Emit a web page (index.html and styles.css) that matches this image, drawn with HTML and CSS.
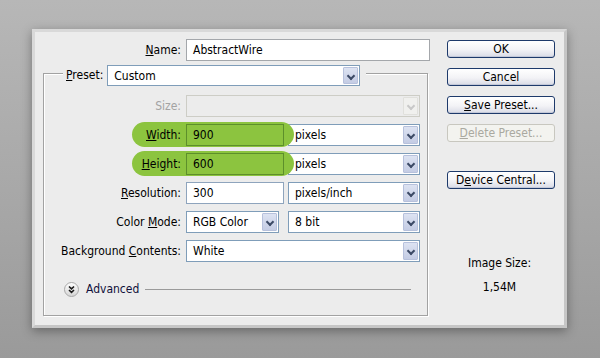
FILE: index.html
```html
<!DOCTYPE html>
<html lang="en">
<head>
    <meta charset="UTF-8">
    <title>New</title>
    <link rel="stylesheet" href="styles.css">
</head>
<body>
    <div class="dialog">
        <div class="main">
            <div class="name-row">
                <label class="lbl"><u>N</u>ame:</label>
                <div class="field text">AbstractWire</div>
            </div>

            <div class="fieldset">
                <div class="legend">
                    <label class="lbl"><u>P</u>reset:</label>
                    <div class="field select preset">Custom<span class="arrow"></span></div>
                </div>

                <div class="rows">
                    <label class="lbl disabled">Size:</label>
                    <div class="field select wide disabled-field"><span class="arrow"></span></div>

                    <div class="hl">
                        <label class="lbl"><u>W</u>idth:</label>
                        <div class="field green">900</div>
                    </div>
                    <div class="field select unit">pixels<span class="arrow"></span></div>

                    <div class="hl">
                        <label class="lbl"><u>H</u>eight:</label>
                        <div class="field green">600</div>
                    </div>
                    <div class="field select unit">pixels<span class="arrow"></span></div>

                    <label class="lbl"><u>R</u>esolution:</label>
                    <div class="field text blue">300</div>
                    <div class="field select unit">pixels/inch<span class="arrow"></span></div>

                    <label class="lbl">Color <u>M</u>ode:</label>
                    <div class="field select mode">RGB Color<span class="arrow"></span></div>
                    <div class="field select unit">8 bit<span class="arrow"></span></div>

                    <label class="lbl">Background <u>C</u>ontents:</label>
                    <div class="field select wide">White<span class="arrow"></span></div>
                </div>

                <div class="advanced">
                    <span class="toggle">
                        <svg width="15" height="15" viewBox="0 0 15 15">
                            <defs>
                                <linearGradient id="tg" x1="0" y1="0" x2="0" y2="1">
                                    <stop offset="0" stop-color="#ffffff"/>
                                    <stop offset="1" stop-color="#d4d4d4"/>
                                </linearGradient>
                            </defs>
                            <circle cx="7.5" cy="7.5" r="7" fill="url(#tg)" stroke="#a8a8a8"/>
                            <path d="M5 4.5 L7.5 6.8 L10 4.5 M5 8 L7.5 10.3 L10 8" fill="none" stroke="#1a1a1a" stroke-width="1.6"/>
                        </svg>
                    </span>
                    <span>Advanced</span>
                    <span class="rule"></span>
                </div>
            </div>
        </div>

        <div class="side">
            <div class="btn">OK</div>
            <div class="btn">Cancel</div>
            <div class="btn"><u>S</u>ave Preset...</div>
            <div class="btn off"><u>D</u>elete Preset...</div>
            <div class="btn central">D<u>e</u>vice Central...</div>
            <div class="size-title">Image Size:</div>
            <div class="size-value">1,54M</div>
        </div>
    </div>
</body>
</html>
```

FILE: styles.css
```css
* {
    margin: 0;
    padding: 0;
    box-sizing: border-box;
}

body {
    width: 600px;
    height: 358px;
    overflow: hidden;
    padding: 29px 0 0 32px;
    background: linear-gradient(180deg, #b7b7b7 0%, #a6a6a6 60%, #9a9a9a 100%);
    font-family: "DejaVu Sans Condensed", "DejaVu Sans", sans-serif;
    font-stretch: condensed;
    font-size: 12px;
    color: #000;
}

u {
    text-decoration: underline;
    text-underline-offset: 1px;
}

.dialog {
    width: 535px;
    height: 299px;
    display: flex;
    background: #ececec;
    border: 3px solid #d9d9d9;
    border-right-color: #c6c6c6;
    border-bottom-color: #c6c6c6;
    box-shadow: 0 3px 10px rgba(0,0,0,0.35);
}

.main {
    width: 396px;
    padding: 7px 0 0 8px;
}

.lbl {
    display: block;
    height: 22px;
    line-height: 22px;
    text-align: right;
    white-space: nowrap;
}

.lbl.disabled {
    color: #a3a3a3;
}

.field {
    position: relative;
    display: flex;
    align-items: center;
    height: 22px;
    padding-left: 6px;
    background: #fff;
    border: 1px solid #7f9db9;
    white-space: nowrap;
}

.field.text {
    border-color: #a4a7ab;
}

.field.blue {
    border-color: #8ea4bd;
}

.name-row {
    display: grid;
    grid-template-columns: 138px 244px;
    column-gap: 5px;
}

.fieldset {
    width: 385px;
    height: 243px;
    margin-top: 12px;
    border: 1px solid #a2a2a2;
    box-shadow: inset 1px 1px 0 #fff, 1px 1px 0 #fff;
}

.legend {
    display: flex;
    width: fit-content;
    gap: 4px;
    height: 21px;
    margin: -9px 0 0 19px;
    padding: 0 6px 0 3px;
    background: #ececec;
}

.legend .lbl {
    height: 21px;
    line-height: 21px;
}

.preset {
    width: 253px;
    height: 21px;
}

/* dropdown button */
.arrow {
    position: absolute;
    top: 1px;
    right: 1px;
    bottom: 1px;
    width: 15px;
    background: linear-gradient(180deg, #dde3f2 0%, #c4cce4 100%);
    border: 1px solid #b7c1dc;
    border-radius: 1px;
}

.arrow::after {
    content: "";
    position: absolute;
    left: 4px;
    top: 5px;
    width: 4px;
    height: 4px;
    border-right: 2px solid #3c4a66;
    border-bottom: 2px solid #3c4a66;
    transform: rotate(45deg);
}

.rows {
    display: grid;
    grid-template-columns: 142px 102px 132px;
    grid-auto-rows: 22px;
    row-gap: 7px;
    margin-top: 9px;
}

.rows .lbl {
    grid-column: 1;
    padding-right: 5px;
}

.rows > .field.blue {
    width: 98px;
}

.wide {
    grid-column: 2 / 4;
}

.unit {
    grid-column: 3;
}

.disabled-field {
    background: #ececec;
    border-color: #cdcdc6;
}

.disabled-field .arrow {
    background: #f0f0ee;
    border-color: #e0e0dc;
}

.disabled-field .arrow::after {
    border-color: #c8c8c8;
}

.mode {
    width: 93px;
}

/* green highlight pill */
.hl {
    grid-column: 1 / 3;
    display: grid;
    grid-template-columns: 142px 98px;
    position: relative;
    z-index: 2;
}

.hl::before {
    content: "";
    position: absolute;
    left: 88px;
    top: -2px;
    width: 162px;
    height: 25px;
    border-radius: 13px;
    background: #8cc43f;
}

.hl .lbl,
.hl .field {
    position: relative;
}

.field.green {
    background: #8cc43f;
    border-color: #5d8f2b;
}

.advanced {
    display: flex;
    align-items: center;
    height: 16px;
    margin: 19px 16px 0 20px;
    gap: 7px;
    color: #10103a;
}

.toggle {
    display: flex;
}

.rule {
    flex: 1;
    height: 1px;
    margin-left: -1px;
    background: #9a9a9a;
}

.side {
    padding: 8px 0 0 16px;
    display: flex;
    flex-direction: column;
}

.btn {
    width: 108px;
    height: 18px;
    display: flex;
    align-items: center;
    justify-content: center;
    margin-bottom: 10px;
    border: 1px solid #1e3a6b;
    border-radius: 3px;
    background: linear-gradient(180deg, #ffffff 0%, #f3f3f6 55%, #d9dbe6 100%);
    box-shadow: inset 0 -1px 0 #c3c8d8;
    color: #000;
}

.btn.off {
    color: #aaa9a0;
    border-color: #c8c7bf;
    background: #f3f3ef;
    box-shadow: none;
}

.btn.central {
    margin-top: 19px;
}

.size-title,
.size-value {
    width: 108px;
    padding-right: 3px;
    text-align: center;
    line-height: 16px;
}

.size-title {
    margin-top: 56px;
}

.size-value {
    margin-top: 8px;
}
```
